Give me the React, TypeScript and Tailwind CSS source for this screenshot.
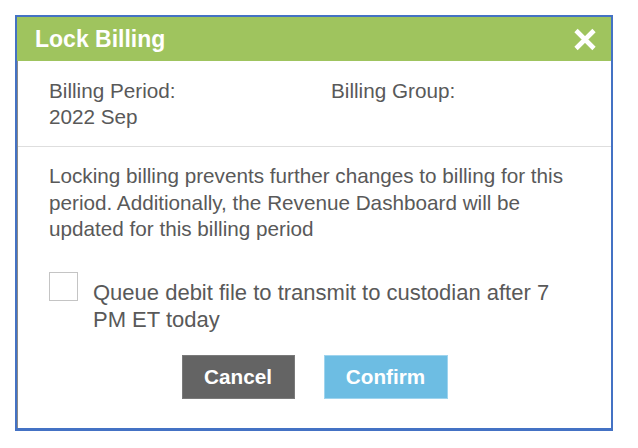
export default function App() {
  return (
    <div className="w-[638px] h-[448px] bg-white pt-[15px] pl-[15px] font-['Liberation_Sans',Arial,sans-serif]">
      {/* Modal frame */}
      <div className="w-[598px] border-2 border-b-[3px] border-[#4472c4] bg-white">
        {/* Header */}
        <div className="h-[44px] bg-[#9fc45e] flex items-center justify-between pl-[18px] pr-[14px]">
          <h2 className="text-[23px] font-bold text-white leading-none">Lock Billing</h2>
          <button className="w-[24px] h-[24px] flex items-center justify-center">
            <svg width="24" height="23" viewBox="0 0 24 23">
              <path d="M3 2.5 L21 20.5 M21 2.5 L3 20.5" stroke="white" strokeWidth="4.6" strokeLinecap="butt" />
            </svg>
          </button>
        </div>

        <div className="border-l border-[#8a8a8a] text-[20.7px] text-[#595959]">
          {/* Billing info */}
          <div className="flex pt-[17px] pb-[16px] pl-[31px] leading-[26px] border-b border-[#dedede]">
            <div className="w-[282px]">
              <div>Billing Period:</div>
              <div>2022 Sep</div>
            </div>
            <div>
              <div>Billing Group:</div>
            </div>
          </div>

          {/* Message */}
          <div className="pt-[16px] pb-[29px] px-[31px]">
            <p className="leading-[26.5px]">
              Locking billing prevents further changes to billing for this period. Additionally, the Revenue Dashboard will be updated for this billing period
            </p>

            <label className="flex items-start gap-[15px] mt-[29px]">
              <span className="w-[29px] h-[29px] shrink-0 border-[1.5px] border-[#c4c4c4] bg-white"></span>
              <span className="mt-[7px] w-[478px] text-[22px] leading-[27px]">
                Queue debit file to transmit to custodian after 7 PM ET today
              </span>
            </label>

            <div className="flex justify-center gap-[29px] mt-[22px] text-white font-bold">
              <button className="w-[113px] h-[44px] bg-[#646464] border border-[#7a7a7a]">Cancel</button>
              <button className="w-[124px] h-[44px] bg-[#6dbde3] border border-[#9fd4ee]">Confirm</button>
            </div>
          </div>
        </div>
      </div>
    </div>
  );
}
